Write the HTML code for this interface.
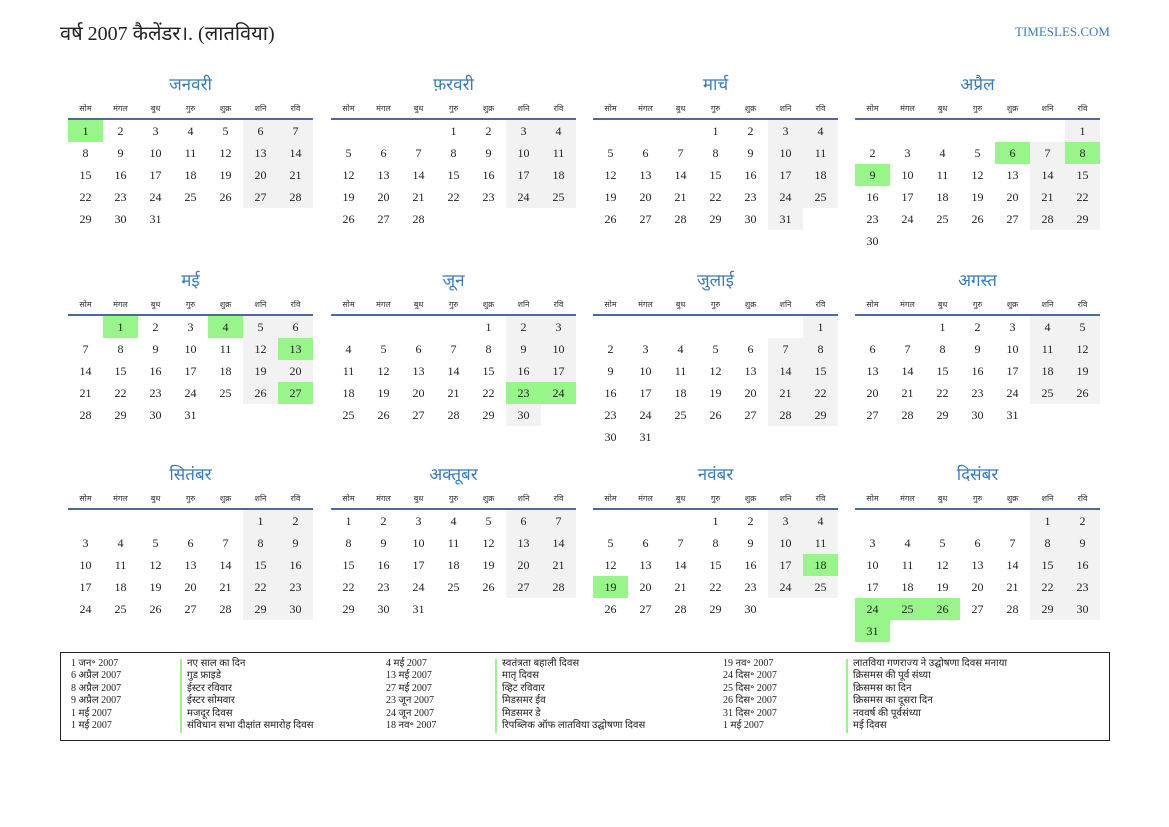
<!DOCTYPE html>
<html><head><meta charset="utf-8">
<style>
body{margin:0;width:1169px;height:827px;background:#fff;position:relative;overflow:hidden;font-family:"Liberation Serif","DejaVu Serif",serif;color:#222}
.a{position:absolute}
.t{position:absolute;font-size:17px;color:#3a7bc0;text-align:center;width:245px}
.wd{position:absolute;font-size:8px;width:35px;text-align:center;color:#333}
.ln{position:absolute;height:2px;background:#4a6a9a;width:245px}
.c{position:absolute;width:35px;height:22px;line-height:22px;text-align:center;font-size:12px}
.w{background:#f2f2f2}.g{background:#98f58a}
#leg{position:absolute;left:60px;top:652px;width:1048px;height:87px;border:1px solid #222}
.r{position:absolute;font-size:10px;line-height:12.4px;white-space:nowrap}
.bar{position:absolute;width:2px;background:#98f58a}
</style></head><body>
<div class="a" style="left:60px;top:19px;font-size:20px;color:#222">वर्ष 2007 कैलेंडर।. (लातविया)</div>
<div class="a" style="right:59px;top:24px;font-size:13px;color:#3a7bc0">TIMESLES.COM</div>
<div id="cal"></div>
<div id="leg"></div>
<script>
var names=["जनवरी","फ़रवरी","मार्च","अप्रैल","मई","जून","जुलाई","अगस्त","सितंबर","अक्तूबर","नवंबर","दिसंबर"];
var st=[0,3,3,6,1,4,6,2,5,0,3,5],len=[31,28,31,30,31,30,31,31,30,31,30,31];
var wds=["सोम","मंगल","बुध","गुरु","शुक्र","शनि","रवि"];
var hl={0:[1],3:[6,8,9],4:[1,4,13,27],5:[23,24],10:[18,19],11:[24,25,26,31]};
var xs=[68,331,593,855],ys=[72,268,462],h="";
for(var m=0;m<12;m++){var x=xs[m%4],y=ys[Math.floor(m/4)];
h+='<div class="t" style="left:'+x+'px;top:'+y+'px">'+names[m]+'</div>';
for(var i=0;i<7;i++)h+='<div class="wd" style="left:'+(x+i*35)+'px;top:'+(y+31)+'px">'+wds[i]+'</div>';
h+='<div class="ln" style="left:'+x+'px;top:'+(y+46)+'px"></div>';
for(var d=1;d<=len[m];d++){var p=st[m]+d-1,col=p%7,row=Math.floor(p/7);
var cls="c";if((hl[m]||[]).indexOf(d)>=0)cls+=" g";else if(col>=5)cls+=" w";
h+='<div class="'+cls+'" style="left:'+(x+col*35)+'px;top:'+(y+48+row*22)+'px">'+d+'</div>';}}
document.getElementById("cal").innerHTML=h;
var L=[["1 जन॰ 2007","नए साल का दिन","4 मई 2007","स्वतंत्रता बहाली दिवस","19 नव॰ 2007","लातविया गणराज्य ने उद्घोषणा दिवस मनाया"],
["6 अप्रैल 2007","गुड फ्राइडे","13 मई 2007","मातृ दिवस","24 दिस॰ 2007","क्रिसमस की पूर्व संध्या"],
["8 अप्रैल 2007","ईस्टर रविवार","27 मई 2007","व्हिट रविवार","25 दिस॰ 2007","क्रिसमस का दिन"],
["9 अप्रैल 2007","ईस्टर सोमवार","23 जून 2007","मिडसमर ईव","26 दिस॰ 2007","क्रिसमस का दूसरा दिन"],
["1 मई 2007","मजदूर दिवस","24 जून 2007","मिडसमर डे","31 दिस॰ 2007","नववर्ष की पूर्वसंध्या"],
["1 मई 2007","संविधान सभा दीक्षांत समारोह दिवस","18 नव॰ 2007","रिपब्लिक ऑफ लातविया उद्घोषणा दिवस","1 मई 2007","मई दिवस"]];
var cx=[10,126,325,441,662,792],g="";
for(var r=0;r<6;r++)for(var k=0;k<6;k++)g+='<div class="r" style="left:'+cx[k]+'px;top:'+(5+r*12.4)+'px">'+L[r][k]+'</div>';
[119,434,785].forEach(function(b){g+='<div class="bar" style="left:'+b+'px;top:6px;height:74px"></div>';});
document.getElementById("leg").innerHTML=g;
</script>
</body></html>
